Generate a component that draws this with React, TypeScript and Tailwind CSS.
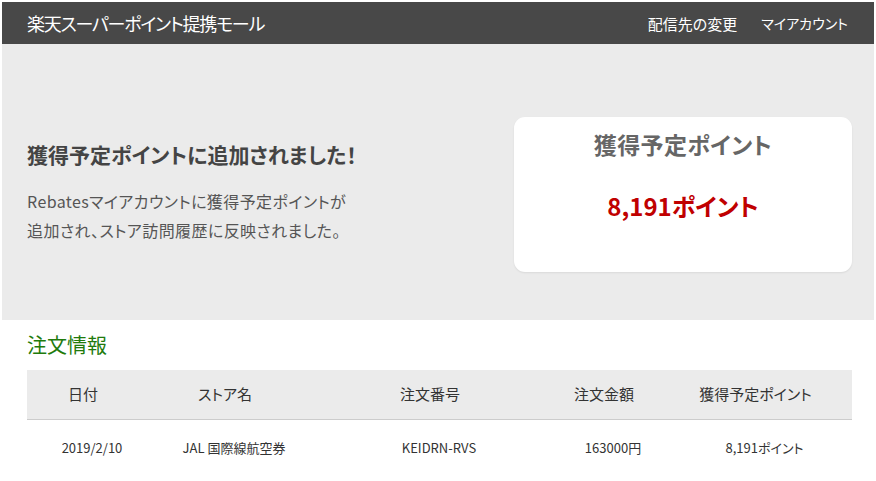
const jp = '[font-family:"Noto_Sans_CJK_JP","Noto_Sans",sans-serif] [font-feature-settings:"palt"]';

const columns = [
  { label: '日付', value: '2019/2/10', w: 'w-[112px]' },
  { label: 'ストア名', value: 'JAL 国際線航空券', w: 'w-[172px]' },
  { label: '注文番号', value: 'KEIDRN-RVS', w: 'w-[238px]' },
  { label: '注文金額', value: '163000円', w: 'w-[110px]' },
  { label: '獲得予定ポイント', value: '8,191ポイント', w: 'flex-1' },
];

export default function App() {
  return (
    <div className={`${jp} min-h-[481px] bg-white pl-[2px] pr-[2px] pt-[2px]`}>
      <header className="flex h-[42px] items-center justify-between bg-[#484848] pl-[25px] pr-[26px] text-white">
        <h1 className="text-[18px] leading-none tracking-[-1.2px]">楽天スーパーポイント提携モール</h1>
        <nav className="flex items-center gap-[24px] leading-none">
          <a className="text-[15px]">配信先の変更</a>
          <a className="text-[14px]">マイアカウント</a>
        </nav>
      </header>

      <section className="flex items-center justify-between bg-[#ebebeb] pb-[48px] pl-[25px] pr-[22px] pt-[73px]">
        <div className="text-[#444]">
          <h2 className="text-[21px] font-bold leading-none">獲得予定ポイントに追加されました！</h2>
          <p className="mt-[22px] text-[16px] leading-[29px] tracking-[0.4px] text-[#555]">
            Rebatesマイアカウントに獲得予定ポイントが
            <br />
            追加され、ストア訪問履歴に反映されました。
          </p>
        </div>
        <div className="flex h-[155px] w-[338px] flex-col items-center rounded-[11px] bg-white pt-[12px] shadow-[0_1px_2px_rgba(0,0,0,0.08)]">
          <div className="text-[23px] font-bold leading-[30px] tracking-[0.4px] text-[#666]">獲得予定ポイント</div>
          <div className="mt-[32px] text-[24px] font-bold leading-[30px] text-[#c00000]">8,191ポイント</div>
        </div>
      </section>

      <section className="px-[25px] pt-[12px]">
        <h3 className="text-[20px] leading-[26px] text-[#217a0b]">注文情報</h3>
        <div className="mt-[12px] w-[825px]">
          <div className="flex h-[50px] items-center border-b border-[#cccccc] bg-[#ebebeb] text-[15px] text-[#333]">
            {columns.map((c) => (
              <div key={c.label} className={`${c.w} text-center`}>
                {c.label}
              </div>
            ))}
          </div>
          <div className="flex h-[56px] items-center text-[13px] text-[#333]">
            {columns.map((c) => (
              <div key={c.label} className={`${c.w} pl-[18px] text-center`}>
                {c.value}
              </div>
            ))}
          </div>
        </div>
      </section>
    </div>
  );
}
